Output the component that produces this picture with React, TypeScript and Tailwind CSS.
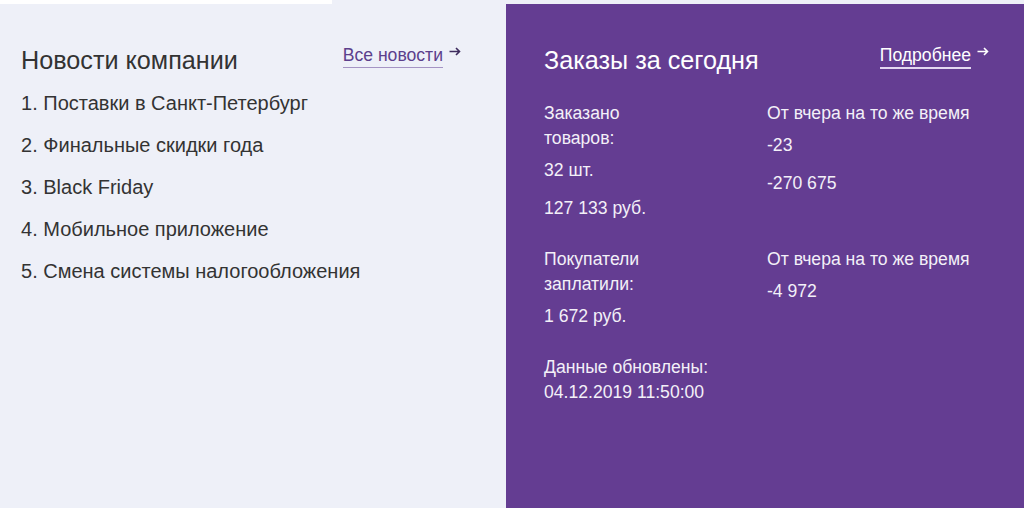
const news = [
  "Поставки в Санкт-Петербург",
  "Финальные скидки года",
  "Black Friday",
  "Мобильное приложение",
  "Смена системы налогообложения",
];

function Arrow({ className }: { className: string }) {
  return (
    <svg width="12" height="9" viewBox="0 0 12 9" fill="none" className={className}>
      <path d="M0.5 4.5H10.5M7 1l3.5 3.5L7 8" stroke="currentColor" strokeWidth="1.6" />
    </svg>
  );
}

function ArrowLink({ label, light }: { label: string; light?: boolean }) {
  return (
    <a href="#" className="flex items-start gap-[6px] text-[17.6px] leading-[22px]">
      <span
        className={
          light
            ? "text-white border-b-2 border-[#e4d8f2] pb-[1px]"
            : "text-[#5c3f8c] border-b border-[#a594c4] pb-[1px]"
        }
      >
        {label}
      </span>
      <Arrow className={light ? "text-white mt-[3px]" : "text-[#3e2c5e] mt-[3px]"} />
    </a>
  );
}

function Stat({ label, values }: { label: string; values: string[] }) {
  return (
    <div className="leading-[25px]">
      <div>{label}</div>
      {values.map((v, i) => (
        <div key={v} className={i === 0 ? "pt-[7px]" : "pt-[13px]"}>
          {v}
        </div>
      ))}
    </div>
  );
}

export default function App() {
  return (
    <div
      className="flex flex-col w-[1024px] h-[508px] bg-[#eef0f8] overflow-hidden"
      style={{ fontFamily: '"Liberation Sans", Arial, sans-serif' }}
    >
      <div className="h-[4px] w-[332px] bg-white shrink-0" />
      <div className="flex flex-1">
        <section className="w-[506px] pl-[21px] pr-[45px] pt-[40px] text-[#333333]">
          <div className="flex items-start justify-between">
            <h2 className="text-[25.2px] leading-[30px] mt-[1px]">Новости компании</h2>
            <ArrowLink label="Все новости" />
          </div>
          <ol className="mt-[16px] text-[20px] leading-[24px] flex flex-col gap-[18.05px]">
            {news.map((n, i) => (
              <li key={n}>
                {i + 1}. {n}
              </li>
            ))}
          </ol>
        </section>
        <section className="flex-1 bg-[#643d92] pl-[38px] pr-[35px] pt-[40px] text-[#f3f0f8]">
          <div className="flex items-start justify-between">
            <h2 className="text-[25.2px] leading-[30px] mt-[1px] text-white">Заказы за сегодня</h2>
            <ArrowLink label="Подробнее" light />
          </div>
          <div className="mt-[26px] text-[17.6px] grid grid-cols-[223px_1fr] gap-y-[26px]">
            <div className="leading-[25px]">
              <div className="w-[110px]">Заказано товаров:</div>
              <div className="pt-[7px]">32 шт.</div>
              <div className="pt-[13px]">127 133 руб.</div>
            </div>
            <Stat label="От вчера на то же время" values={["-23", "-270 675"]} />
            <div className="leading-[25px]">
              <div className="w-[110px]">Покупатели заплатили:</div>
              <div className="pt-[7px]">1 672 руб.</div>
            </div>
            <Stat label="От вчера на то же время" values={["-4 972"]} />
            <div className="leading-[25px] col-span-2">
              <div>Данные обновлены:</div>
              <div>04.12.2019 11:50:00</div>
            </div>
          </div>
        </section>
      </div>
    </div>
  );
}
